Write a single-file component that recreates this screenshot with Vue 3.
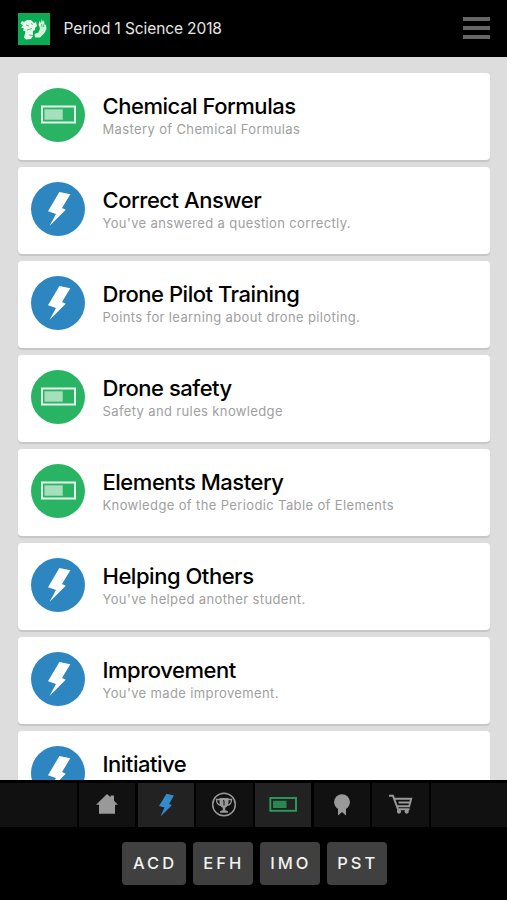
<template>
  <div class="screen">
    <header class="top-bar">
      <svg class="logo" viewBox="0 0 32 32">
        <rect width="32" height="32" fill="#0bab55" />
        <path
          fill="#e8f8e9"
          d="M4 8l2 1 3-2 4 0 3 3 2-1 1 4-2 2 0 2-2 1 0 5-2 3-5 .5-2-2 1.500-6-2.500-1 1-2-3-1 2-2-2.500-2z"
        />
        <path
          fill="#d3f1d8"
          d="M16.500 21l4-1.500 1.500-4-1.500-4 1-3.500 1.500 2 .7-4 1.300 3 1-2 .5 4 1.500 1 .5 4-2 4-4.500 4.500-5 0z"
        />
        <path
          fill="none"
          stroke="#0bab55"
          stroke-width=".7"
          d="M8 12l3 1M13 10.500l2 1M9 17l5-1.500M11 22l4 .5M23.500 11l.5 3M26 11l-.5 3"
        />
      </svg>
      <h1 class="class-name">Period 1 Science 2018</h1>
      <button class="menu" aria-label="Menu">
        <span></span>
        <span></span>
        <span></span>
      </button>
    </header>

    <main class="list">
      <article v-for="item in items" :key="item.title" class="card">
        <div :class="['badge', item.type]">
          <svg v-if="item.type === 'level'" class="badge-icon" viewBox="0 0 54 54">
            <rect x="11" y="18.5" width="33" height="16" fill="none" stroke="#e4f7eb" stroke-width="2" />
            <rect x="13.5" y="21.3" width="18.2" height="10.4" fill="#a6dfbc" />
          </svg>
          <svg v-else class="badge-icon" viewBox="0 0 54 54">
            <path fill="#fff" d="M28.4 10L39.3 12.3L31 26L34.7 27.8L18.5 44L25 32L17 29.3z" />
          </svg>
        </div>
        <div class="card-text">
          <h2 class="title">{{ item.title }}</h2>
          <p class="description">{{ item.description }}</p>
        </div>
      </article>
    </main>

    <footer class="bottom">
      <nav class="tabs">
        <div class="tab edge"></div>
        <div class="tab">
          <svg viewBox="0 0 28 28" fill="#999">
            <path d="M14 3l3.500 3.300V4.500h3.500v5.200l4 4.100h-3v9H6v-9H3z" />
          </svg>
        </div>
        <div class="tab active">
          <svg viewBox="0 0 28 28" fill="#348bc9">
            <path d="M14.500 2.800L22 4.500L17 13L20 14L8.500 25.500L12.500 16.600L7 15z" />
          </svg>
        </div>
        <div class="tab">
          <svg viewBox="0 0 28 28">
            <circle cx="14" cy="13.5" r="11.3" fill="none" stroke="#999" stroke-width="1.5" />
            <path
              fill="none"
              stroke="#999"
              stroke-width="1.3"
              d="M10 8.500H6.500c0 3.500 1.700 5.700 4.700 5.800M18 8.500h3.500c0 3.500-1.700 5.700-4.700 5.800"
            />
            <path fill="#999" d="M9.500 7h9v4.500c0 2.500-1.300 4.500-3.300 5.300v2.500l2.800 1v1.500h-8v-1.500l2.800-1v-2.500c-2-.8-3.300-2.800-3.300-5.300z" />
            <path stroke="#111" stroke-width="1" d="M13 10l1-.5v5" fill="none" />
          </svg>
        </div>
        <div class="tab active">
          <svg viewBox="0 0 28 28">
            <rect x="1.3" y="7" width="25.7" height="12.8" fill="none" stroke="#2a9b59" stroke-width="1.9" />
            <rect x="4" y="9.8" width="13.5" height="7.2" fill="#2b8752" />
          </svg>
        </div>
        <div class="tab">
          <svg viewBox="0 0 28 28" fill="#999">
            <circle cx="14" cy="11.2" r="7.9" />
            <path d="M10 16h8v8.500l-4-3.500-4 3.500z" />
          </svg>
        </div>
        <div class="tab">
          <svg viewBox="0 0 28 28" fill="none" stroke="#999" stroke-width="1.9">
            <path d="M2 4.800h4l5 13.500h11.500M7.500 7.800h16.700l-2 7.500H10.500M11.500 11.500h11.500" />
            <circle cx="12" cy="20.5" r="1.2" fill="#999" />
            <circle cx="19.7" cy="20.5" r="1.2" fill="#999" />
          </svg>
        </div>
        <div class="tab rest"></div>
      </nav>
      <div class="groups">
        <button v-for="group in groups" :key="group" class="group">{{ group }}</button>
      </div>
    </footer>
  </div>
</template>

<script setup>
const items = [
  { title: 'Chemical Formulas', description: 'Mastery of Chemical Formulas', type: 'level' },
  { title: 'Correct Answer', description: "You've answered a question correctly.", type: 'points' },
  { title: 'Drone Pilot Training', description: 'Points for learning about drone piloting.', type: 'points' },
  { title: 'Drone safety', description: 'Safety and rules knowledge', type: 'level' },
  { title: 'Elements Mastery', description: 'Knowledge of the Periodic Table of Elements', type: 'level' },
  { title: 'Helping Others', description: "You've helped another student.", type: 'points' },
  { title: 'Improvement', description: "You've made improvement.", type: 'points' },
  { title: 'Initiative', description: '', type: 'points' }
]

const groups = ['ACD', 'EFH', 'IMO', 'PST']
</script>

<style>
body {
  margin: 0;
  overflow: hidden;
}
</style>

<style scoped>
.screen {
  display: grid;
  grid-template-rows: 57px 723px 120px;
  height: 900px;
  overflow: hidden;
  background: #ddd;
  font-family: Inter, 'Liberation Sans', sans-serif;
}

.top-bar {
  display: flex;
  align-items: center;
  box-sizing: border-box;
  padding: 0 17px 0 18px;
  background: #000;
}

.logo {
  width: 32px;
  height: 32px;
}

.class-name {
  flex: 1;
  margin: 1px 0 0 13.5px;
  color: #e6e6e6;
  font-size: 15.5px;
  font-weight: 400;
  line-height: 20px;
  letter-spacing: -0.11px;
}

.menu {
  display: flex;
  flex-direction: column;
  gap: 5px;
  width: 27px;
  margin-bottom: 1px;
  padding: 0;
  border: 0;
  background: none;
}

.menu span {
  height: 4px;
  background: #666;
}

.list {
  display: flex;
  flex-direction: column;
  gap: 7.05px;
  min-height: 0;
  padding: 16px 17px 0 18px;
  box-sizing: border-box;
  overflow: hidden;
}

.card {
  display: flex;
  flex: 0 0 87px;
  box-sizing: border-box;
  padding: 14.5px 13px 0;
  border-radius: 4px;
  background: #fff;
  box-shadow: 0 2px 1px #c6c6c6;
}

.badge {
  flex: none;
  width: 54px;
  height: 54px;
  border-radius: 50%;
}

.badge.level {
  background: #28b463;
}

.badge.points {
  background: #2e86c1;
}

.badge-icon {
  display: block;
  width: 54px;
  height: 54px;
}

.card-text {
  margin-left: 17.5px;
  padding-top: 4px;
}

.title {
  margin: 0;
  color: #000;
  font-size: 22px;
  font-weight: 500;
  line-height: 28px;
  letter-spacing: -0.47px;
  white-space: nowrap;
}

.description {
  margin: 0.4px 0 0;
  color: #a0a0a0;
  font-size: 13px;
  line-height: 18px;
  letter-spacing: 0.37px;
  white-space: nowrap;
}

.bottom {
  z-index: 1;
  background: #000;
}

.tabs {
  display: flex;
  gap: 2.5px;
  height: 44px;
  padding-top: 3px;
}

.tab {
  display: flex;
  flex: 0 0 56.2px;
  align-items: center;
  justify-content: center;
  background: #111;
}

.tab.edge {
  flex-basis: 76.5px;
}

.tab.rest {
  flex: 1;
}

.tab.active {
  background: #222;
}

.tab svg {
  width: 28px;
  height: 28px;
}

.groups {
  display: flex;
  gap: 6.5px;
  padding: 15px 0 0 122px;
}

.group {
  width: 60.5px;
  height: 43px;
  padding: 0 0 1px 2px;
  border: 0;
  border-radius: 4px;
  background: #404040;
  color: #f2f2f2;
  font-family: inherit;
  font-size: 16.5px;
  font-weight: 500;
  letter-spacing: 3px;
}

.group:first-child {
  width: 64px;
}
</style>
